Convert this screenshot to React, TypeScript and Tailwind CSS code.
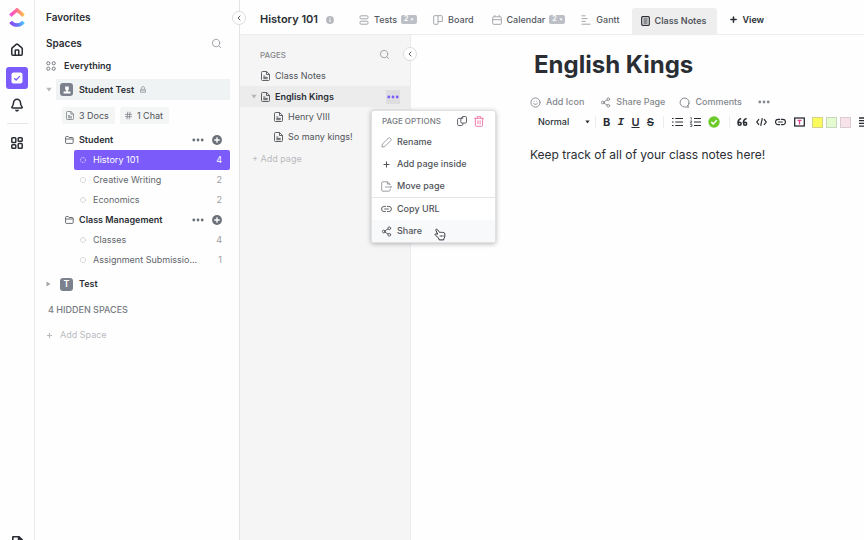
import React from 'react';
import { Hash, ChevronLeft, Search, Plus, Smile, Share2, Home, Bell } from 'lucide-react';

interface IconProps {
  className?: string;
}

const Logo = () => (
  <svg viewBox="0 0 16 20" className="h-5 w-4" fill="none">
    <defs>
      <linearGradient id="roof" x1="0" x2="1">
        <stop offset="0" stopColor="#f04fd8" />
        <stop offset="0.5" stopColor="#ff6f8e" />
        <stop offset="1" stopColor="#ffc04a" />
      </linearGradient>
      <linearGradient id="bowl" x1="0" x2="1">
        <stop offset="0" stopColor="#8a4df5" />
        <stop offset="0.5" stopColor="#6c6cf5" />
        <stop offset="1" stopColor="#4fc3fb" />
      </linearGradient>
    </defs>
    <path d="M1.3 7.6 8 1.9l6.7 5.7" stroke="url(#roof)" strokeWidth="3.4" />
    <path d="M1.6 13.8c3.5 4.3 9.3 4.3 12.8 0" stroke="url(#bowl)" strokeWidth="3.6" />
  </svg>
);

const GridIcon = ({ className }: IconProps) => (
  <svg viewBox="0 0 12 12" className={className} fill="none" stroke="currentColor" strokeWidth="1.5">
    <rect x="0.8" y="0.8" width="4" height="4.8" rx="0.8" />
    <rect x="7.2" y="0.8" width="4" height="3.4" rx="0.8" />
    <rect x="0.8" y="7.8" width="4" height="3.4" rx="0.8" />
    <rect x="7.2" y="6.4" width="4" height="4.8" rx="0.8" />
  </svg>
);

const EverythingIcon = () => (
  <svg viewBox="0 0 10 10" className="size-[10px] text-[#777b81]" fill="none" stroke="currentColor">
    <rect x="0.8" y="0.8" width="3" height="3" rx="1.2" />
    <rect x="6.2" y="0.8" width="3" height="3" rx="1.2" />
    <rect x="0.8" y="6.2" width="3" height="3" rx="1.2" />
    <rect x="6.2" y="6.2" width="3" height="3" rx="1.2" />
  </svg>
);

const PageIcon = ({ className }: IconProps) => (
  <svg viewBox="0 0 9 10" className={className} fill="none" stroke="currentColor" strokeWidth="0.9">
    <path d="M1.5.5h4L8.5 3.3v5.2a1 1 0 0 1-1 1h-6a1 1 0 0 1-1-1v-7a1 1 0 0 1 1-1ZM5.5.5v3h3" />
    <path d="M2.3 5h2M2.3 6.4h4.4M2.3 7.7h4.4" />
  </svg>
);

const FolderIcon = () => (
  <svg viewBox="0 0 9 8" className="h-2 w-[9px] text-[#5c6066]" fill="none" stroke="currentColor" strokeWidth="0.9">
    <path d="M.6 6.6V1.3c0-.5.3-.8.8-.8h1.8l.9 1h3.3c.5 0 .8.3.8.8v4.3c0 .5-.3.8-.8.8h-6c-.5 0-.8-.3-.8-.8ZM.6 3h7.6" />
  </svg>
);

const Dots = ({ className }: IconProps) => (
  <svg viewBox="0 0 12 4" className={className} fill="currentColor">
    <circle cx="1.8" cy="2" r="1.4" />
    <circle cx="6" cy="2" r="1.4" />
    <circle cx="10.2" cy="2" r="1.4" />
  </svg>
);

const LinkIcon = ({ className }: IconProps) => (
  <svg viewBox="0 0 12 8" className={className} fill="none" stroke="currentColor" strokeLinecap="round">
    <path d="M5 1.2H3.4a2.8 2.8 0 0 0 0 5.6H5M7 1.2h1.6a2.8 2.8 0 0 1 0 5.6H7M4 4h4" />
  </svg>
);

const Caret = ({ className }: IconProps) => (
  <svg viewBox="0 0 6 5" className={className} fill="currentColor">
    <path d="M.3.7h5.4L3 4.5Z" />
  </svg>
);

const CollapseButton = ({ label, className }: { label: string; className: string }) => (
  <button
    aria-label={label}
    className={`absolute z-10 flex size-[14px] items-center justify-center rounded-full border border-[#dcdcde] bg-white text-[#5c6066] ${className}`}
  >
    <ChevronLeft size={8} strokeWidth={3} />
  </button>
);

const Rail = () => (
  <nav className="flex w-[35px] shrink-0 flex-col items-center border-r border-[#e9ebef] pt-2 text-[#2a2e34]">
    <a href="#home" aria-label="ClickUp">
      <Logo />
    </a>
    <button aria-label="Home" className="mt-[15px]">
      <Home size={14} strokeWidth={2.6} />
    </button>
    <button aria-label="Tasks" className="mt-[10px] flex size-[22px] items-center justify-center rounded-[3px] bg-[#7b5cfa]">
      <svg viewBox="0 0 12 12" className="size-3" fill="none">
        <rect x="0.5" y="0.5" width="11" height="11" rx="2" fill="#fff" />
        <path d="m3.2 6.2 1.9 1.8 3.8-3.9" stroke="#7b5cfa" strokeWidth="1.3" />
      </svg>
    </button>
    <button aria-label="Notifications" className="mt-[9px]">
      <Bell size={14} strokeWidth={2.6} />
    </button>
    <hr className="mt-[11px] w-[21px] border-[#e3e5e9]" />
    <button aria-label="Dashboards" className="mt-[13px]">
      <GridIcon className="size-3" />
    </button>
    <button aria-label="Docs" className="mt-auto -mb-2">
      <PageIcon className="h-3 w-[11px] stroke-[1.5]" />
    </button>
  </nav>
);

const folders = [
  {
    name: 'Student',
    lists: [
      { name: 'History 101', count: 4, active: true },
      { name: 'Creative Writing', count: 2 },
      { name: 'Economics', count: 2 },
    ],
  },
  {
    name: 'Class Management',
    lists: [
      { name: 'Classes', count: 4 },
      { name: 'Assignment Submissio...', count: 1 },
    ],
  },
];

const ListLink = ({ name, count, active }: { name: string; count: number; active?: boolean }) => (
  <a
    href="#list"
    className={`ml-7 flex h-5 items-center rounded-[2px] pr-2 pl-[6px] ${
      active ? 'bg-[#7b5cfa] text-white' : 'text-[#62666c]'
    }`}
  >
    <svg viewBox="0 0 6 6" className={`size-[6px] ${active ? '' : 'text-[#a9acb2]'}`} fill="none" stroke="currentColor" strokeWidth="0.8">
      <circle cx="3" cy="3" r="2.5" strokeDasharray="1.1 0.86" />
    </svg>
    <span className="ml-[7px] flex-1 whitespace-nowrap">{name}</span>
    <span className={active ? '' : 'text-[#9a9da3]'}>{count}</span>
  </a>
);

const Sidebar = () => (
  <aside className="relative flex w-[205px] shrink-0 flex-col border-r border-[#e3e4e7] pt-[7px] pr-[9px] pl-[11px] text-[9px] text-[#2a2e34]">
    <CollapseButton label="Collapse sidebar" className="top-[11px] -right-[7px]" />
    <h2 className="flex h-5 items-center text-[10px] font-semibold">Favorites</h2>
    <div className="mt-[6px] flex h-5 items-center justify-between pr-2">
      <h2 className="text-[10px] font-semibold">Spaces</h2>
      <button aria-label="Search spaces" className="text-[#9a9da3]">
        <Search size={11} />
      </button>
    </div>
    <a href="#everything" className="mt-[3px] flex h-5 items-center gap-2 font-semibold">
      <EverythingIcon />
      Everything
    </a>
    <div className="mt-[3px] flex items-center gap-1">
      <Caret className="h-[5px] w-[6px] shrink-0 text-[#b4b7bc]" />
      <a href="#student-test" className="flex h-[21px] flex-1 items-center bg-[#f0f3f4] pl-1 font-semibold">
        <span className="flex size-[13px] items-center justify-center rounded-[3px] bg-[#7c828d]">
          <svg viewBox="0 0 8 8" className="size-2" fill="#fff">
            <path d="M2.2.6h3.6v3L4.8 4.6v1h2.6v1.8H.6V5.600h2.600v-1L2.200 3.600Z" />
          </svg>
        </span>
        <span className="mx-[6px]">Student Test</span>
        <svg viewBox="0 0 6 7" className="h-[7px] w-[6px] text-[#a9adb3]" fill="none" stroke="currentColor">
          <path d="M1.5 3V2a1.5 1.5 0 0 1 3 0v1M.5 3.3h5v3h-5ZM.5 4.8h5" />
        </svg>
      </a>
    </div>
    <div className="mt-[7px] ml-4 flex gap-[5px] text-[#505459]">
      <button className="flex h-[17px] items-center gap-[5px] rounded-[2px] bg-[#f4f5f5] pr-[6px] pl-1">
        <PageIcon className="h-[9px] w-2 text-[#777b81]" />
        3 Docs
      </button>
      <button className="flex h-[17px] items-center gap-1 rounded-[2px] bg-[#f4f5f5] pr-[6px] pl-1">
        <Hash size={9} className="text-[#777b81]" />1 Chat
      </button>
    </div>
    <div className="mt-[6px]">
      {folders.map((folder) => (
        <section key={folder.name}>
          <div className="ml-[19px] flex h-5 items-center pr-2 font-semibold">
            <FolderIcon />
            <h3 className="ml-[5px] flex-1">{folder.name}</h3>
            <button aria-label="Folder options" className="text-[#6b6f76]">
              <Dots className="h-1 w-3" />
            </button>
            <button aria-label="Add list" className="ml-2">
              <svg viewBox="0 0 10 10" className="size-[10px]">
                <circle cx="5" cy="5" r="4.9" fill="#6b6f78" />
                <path d="M5 2.3v5.4M2.3 5h5.4" stroke="#fff" strokeWidth="1.3" />
              </svg>
            </button>
          </div>
          {folder.lists.map((list) => (
            <ListLink key={list.name} {...list} />
          ))}
        </section>
      ))}
    </div>
    <a href="#test" className="mt-1 flex h-5 items-center font-semibold">
      <svg viewBox="0 0 5 6" className="h-[6px] w-[5px] text-[#a3a6ab]" fill="currentColor">
        <path d="M.5.4v5.2L4.6 3Z" />
      </svg>
      <span className="mr-[6px] ml-[9px] flex size-[13px] items-center justify-center rounded-[3px] bg-[#7c828d] text-white">T</span>
      Test
    </a>
    <button className="mt-[6px] flex h-5 items-center pl-[2px] font-medium text-[#777b81]">4 HIDDEN SPACES</button>
    <button className="mt-[5px] flex h-5 items-center gap-[7px] text-[#b9bbbf]">
      <Plus size={7} strokeWidth={4} />
      Add Space
    </button>
  </aside>
);

const CountBadge = () => (
  <span className="ml-1 flex h-[9px] w-4 items-center justify-center gap-[2px] rounded-[2px] bg-[#bcbfc5] text-[7px] font-semibold text-white">
    2
    <Caret className="h-[3px] w-1" />
  </span>
);

const Header = () => (
  <header className="flex h-[35px] shrink-0 items-center overflow-hidden border-b border-[#ededef] pt-[5px] pl-5 text-[9px] font-medium whitespace-nowrap text-[#54585e]">
    <h1 className="text-[11px] font-semibold text-[#2a2e34]">History 101</h1>
    <button aria-label="List info" className="ml-2">
      <svg viewBox="0 0 8 8" className="size-2">
        <circle cx="4" cy="4" r="3.9" fill="#b4b7bc" />
        <path d="M4 1.6v1M4 3.3v3" stroke="#fff" strokeWidth="1.1" />
      </svg>
    </button>
    <a href="#tests" className="ml-[25px] flex items-center">
      <svg viewBox="0 0 10 10" className="mr-[5px] size-[10px] text-[#a3a6ab]" fill="none" stroke="currentColor">
        <rect x="1" y="0.8" width="8" height="3" rx="1" />
        <rect x="1" y="6.2" width="8" height="3" rx="1" />
      </svg>
      Tests
      <CountBadge />
    </a>
    <a href="#board" className="ml-4 flex items-center">
      <svg viewBox="0 0 10 10" className="mr-[5px] size-[10px] text-[#a3a6ab]" fill="none" stroke="currentColor">
        <path d="M1.3.7h7.4c.4 0 .6.2.6.6v5.2H5v2c0 .5-.2.8-.6.8H1.3c-.4 0-.6-.3-.6-.8V1.3c0-.4.2-.6.6-.6ZM5 .7v5.8" />
      </svg>
      Board
    </a>
    <a href="#calendar" className="ml-[18px] flex items-center">
      <svg viewBox="0 0 10 10" className="mr-[5px] size-[10px] text-[#a3a6ab]" fill="none" stroke="currentColor">
        <path d="M1.3 1.8h7.4c.4 0 .6.2.6.6v6.1c0 .5-.2.8-.6.8H1.3c-.4 0-.6-.3-.6-.8V2.4c0-.4.2-.6.6-.6ZM.7 4.7h8.6M2.8 0v2M7.2 0v2" />
      </svg>
      Calendar
      <CountBadge />
    </a>
    <a href="#gantt" className="ml-4 flex items-center">
      <svg viewBox="0 0 10 10" className="mr-[5px] size-[10px] text-[#a3a6ab]" fill="none" stroke="currentColor">
        <path d="M.5.8h4M.5 3.6h6M.5 6.4h4M.5 9.2h9" />
      </svg>
      Gantt
    </a>
    <a href="#class-notes" className="ml-3 flex h-[26px] shrink-0 items-center self-end rounded-t-[3px] bg-[#eeeeee] pr-[11px] pl-[9px] font-semibold">
      <svg viewBox="0 0 9 10" className="mr-[5px] h-[10px] w-[9px] text-[#2a2e34]" fill="none" stroke="currentColor" strokeWidth="1.2">
        <rect x="0.7" y="0.7" width="7.6" height="8.6" rx="1" />
        <path d="M2.4 3h4.2M2.4 5h4.2M2.4 7h4.2" />
      </svg>
      Class Notes
    </a>
    <button className="ml-3 flex items-center gap-1 font-semibold text-[#2a2e34]">
      <Plus size={9} strokeWidth={4} />
      View
    </button>
  </header>
);

const menuRow = 'flex h-[22px] w-full items-center gap-[5px] pl-[9px] text-[9px] font-medium text-[#505459]';

const PageMenu = () => (
  <div role="menu" className="absolute top-6 left-[131px] z-20 w-[125px] rounded-[3px] border border-[#e1e1e4] bg-white shadow-[0_1px_5px_rgba(0,0,0,0.28)]">
    <div className="flex h-5 items-center pr-[11px] pl-[10px]">
      <span className="flex-1 text-[8px] font-medium whitespace-nowrap text-[#777b81]">PAGE OPTIONS</span>
      <button aria-label="Duplicate page" className="text-[#505459]">
        <svg viewBox="0 0 10 10" className="size-[10px]" fill="none" stroke="currentColor" strokeWidth="0.9">
          <path d="M5.7.5h2.500q1.300 0 1.300 1.200v4.200q0 1.200-1.300 1.200H5q-1.200 0-1.200-1.200V2.400ZM5.700.5v1.900H3.800M3.800 2.400h-2Q.6 2.400.6 3.600v4.700q0 1.200 1.200 1.200h2.800q1.200 0 1.200-1.200V7.100" />
        </svg>
      </button>
      <button aria-label="Delete page" className="ml-[7px] text-[#ee6fa3]">
        <svg viewBox="0 0 10 11" className="h-[11px] w-[10px]" fill="none" stroke="currentColor" strokeWidth="0.9">
          <path d="M.2 2.3h9.600M3.200 2.3V.7h3.600v1.600M1.400 2.3v7q0 1 1 1h5.200q1 0 1-1v-7M3.900 4.400v3.900M6.100 4.400v3.900" />
        </svg>
      </button>
    </div>
    <button role="menuitem" className={menuRow}>
      <svg viewBox="0 0 11 11" className="size-[11px] text-[#85888e]" fill="none" stroke="currentColor" strokeWidth="0.8">
        <path d="M.9 10.100 1.500 7 7.600.9q.6-.5 1.200 0L10 2.100q.6.6 0 1.200L3.900 9.500Z" />
      </svg>
      Rename
    </button>
    <button role="menuitem" className={menuRow}>
      <svg viewBox="0 0 11 11" className="size-[11px]" stroke="currentColor">
        <path d="M5.500 2.500v6M2.500 5.500h6" />
      </svg>
      Add page inside
    </button>
    <button role="menuitem" className={menuRow}>
      <svg viewBox="0 0 11 11" className="size-[11px] text-[#85888e]" fill="none" stroke="currentColor" strokeWidth="0.8">
        <path d="M9 4V3H6.300V.8M6.300.8 9 3M6.300.8H1.800Q.7.8.7 1.900v7.200q0 1.100 1.100 1.100h6Q9 10.200 9 9.100V8M4 6h6.500M9.300 4.800 10.500 6 9.300 7.200" />
      </svg>
      Move page
    </button>
    <hr className="border-[#e4e4e6]" />
    <button role="menuitem" className={menuRow}>
      <LinkIcon className="h-2 w-[11px]" />
      Copy URL
    </button>
    <button role="menuitem" className={`${menuRow} relative bg-[#f8f9fb]`}>
      <Share2 size={11} />
      Share
      <svg viewBox="0 0 12 13" className="absolute top-2 left-[62px] h-[13px] w-3" fill="#fff" stroke="#2a2e34" strokeWidth="1">
        <path d="M3.200 1.400c-.7-.6-1.700.1-1.300 1l1.800 3.800-1.700-.4c-.9-.1-1.300.8-.6 1.400l3 2.600.8 2.100h4.500l.3-1.600c1-1.500 1.100-3.100.5-5.200-.3-.8-1.300-.8-1.500-.2-.3-.8-1.300-.9-1.600-.2-.5-.7-1.300-.6-1.500 0Z" />
        <path d="M6.200 7v2M7.600 7v2M9 7v2" strokeWidth="0.6" />
      </svg>
    </button>
  </div>
);

const PagesPanel = () => (
  <aside className="relative w-[171px] shrink-0 border-r border-[#ececee] bg-[#f5f5f5] pt-[9px] text-[9px] text-[#505459]">
    <CollapseButton label="Collapse pages" className="top-3 -right-[7px]" />
    <div className="flex h-[21px] items-center justify-between pr-5 pl-5">
      <h2 className="text-[8px] font-medium text-[#85888e]">PAGES</h2>
      <button aria-label="Search pages" className="text-[#9a9da3]">
        <Search size={11} />
      </button>
    </div>
    <a href="#page-1" className="flex h-[21px] items-center gap-[5px] pl-[21px]">
      <PageIcon className="h-[10px] w-[9px]" />
      Class Notes
    </a>
    <div className="relative flex h-[21px] items-center bg-[#ececec] pr-[10px] pl-[11px] font-semibold text-[#2a2e34]">
      <Caret className="h-[5px] w-[6px] text-[#b4b7bc]" />
      <a href="#page-2" className="ml-1 flex flex-1 items-center gap-[5px]">
        <PageIcon className="h-[10px] w-[9px] text-[#505459]" />
        English Kings
      </a>
      <button aria-label="Page options" className="flex size-[14px] items-center justify-center bg-[#dedee0] text-[#7b5cfa]">
        <Dots className="h-1 w-3" />
      </button>
      <PageMenu />
    </div>
    <a href="#page-3" className="flex h-5 items-center gap-[5px] pl-[34px]">
      <PageIcon className="h-[10px] w-[9px]" />
      Henry VIII
    </a>
    <a href="#page-4" className="flex h-5 items-center gap-[5px] pl-[34px]">
      <PageIcon className="h-[10px] w-[9px]" />
      So many kings!
    </a>
    <button className="mt-[2px] flex h-5 items-center pl-3 text-[#b9bbbf]">+ Add page</button>
  </aside>
);

const Separator = () => <span className="h-3 w-px shrink-0 bg-[#ededef]" />;

const Toolbar = () => (
  <div className="flex h-5 items-center text-[#2a2e34]">
    <div className="relative ml-2 flex w-[52px] shrink-0 items-center">
      <select aria-label="Text style" className="w-full appearance-none bg-transparent text-[9px] font-medium">
        <option>Normal</option>
      </select>
      <Caret className="pointer-events-none absolute right-0 h-1 w-[5px]" />
    </div>
    <span className="w-[5px] shrink-0" />
    <Separator />
    <div className="ml-[7px] flex w-[51px] shrink-0 justify-between text-[11px]">
      <button aria-label="Bold" className="font-bold">B</button>
      <button aria-label="Italic" className="font-['Liberation_Mono'] font-bold italic">I</button>
      <button aria-label="Underline" className="font-semibold underline">U</button>
      <button aria-label="Strikethrough" className="font-semibold line-through">S</button>
    </div>
    <span className="w-[9px] shrink-0" />
    <Separator />
    <div className="ml-2 flex shrink-0 items-center gap-[7px]">
      <button aria-label="Bulleted list">
        <svg viewBox="0 0 11 10" className="h-[10px] w-[11px]" stroke="currentColor" strokeWidth="1.2">
          <path d="M0 1.500h1.600M0 5h1.600M0 8.500h1.600M3.300 1.500H11M3.300 5H11M3.300 8.500H11" />
        </svg>
      </button>
      <button aria-label="Numbered list">
        <svg viewBox="0 0 11 10" className="h-[10px] w-[11px]" fill="none" stroke="currentColor" strokeWidth="1.2">
          <path d="M4 1.500h7M4 5h7M4 8.500h7" />
          <path d="M.4.6h.9v2M.2 4h1.700L.3 6h1.800M.2 7.500h1.700v2H.2" strokeWidth="0.7" />
        </svg>
      </button>
      <button aria-label="Checklist">
        <svg viewBox="0 0 12 12" className="size-3" fill="none">
          <circle cx="6" cy="6" r="5.700" fill="#6bc92a" />
          <path d="m3.300 6.100 1.900 1.900 3.600-3.700" stroke="#fff" strokeWidth="1.500" />
        </svg>
      </button>
    </div>
    <span className="w-[9px] shrink-0" />
    <Separator />
    <div className="ml-[7px] flex shrink-0 items-center gap-2">
      <button aria-label="Quote">
        <svg viewBox="0 0 11 10" className="h-[10px] w-[11px]" fill="none" stroke="currentColor" strokeWidth="1.600">
          <path d="M4.200 1.500Q1 2.200 1 6" />
          <circle cx="2.600" cy="6.700" r="1.500" />
          <path d="M9.600 1.500Q6.400 2.200 6.400 6" />
          <circle cx="8.100" cy="6.700" r="1.500" />
        </svg>
      </button>
      <button aria-label="Code">
        <svg viewBox="0 0 11 10" className="h-[10px] w-[11px]" fill="none" stroke="currentColor" strokeWidth="1.200">
          <path d="M3 2.200.7 5 3 7.800M8 2.200 10.300 5 8 7.800M6.300 1.200 4.700 8.800" />
        </svg>
      </button>
      <button aria-label="Link">
        <LinkIcon className="h-2 w-[11px] stroke-[1.3]" />
      </button>
      <button aria-label="Text colour">
        <svg viewBox="0 0 11 10" className="h-[10px] w-[11px]" fill="none" stroke="currentColor" strokeWidth="1.300">
          <rect x="0.700" y="1" width="9.600" height="8" />
          <path d="M3.500 3.400h4M5.500 3.400v4" stroke="#e8478f" />
        </svg>
      </button>
    </div>
    <div className="ml-[7px] flex shrink-0 gap-[3px]">
      <button aria-label="Yellow highlight" className="size-[11px] border border-[#d5d58a] bg-[#f8fa5e]" />
      <button aria-label="Green highlight" className="size-[11px] border border-[#c9d6bd] bg-[#e4fbd0]" />
      <button aria-label="Pink highlight" className="size-[11px] border border-[#d9ccd1] bg-[#f9e3ea]" />
    </div>
    <button aria-label="Align" className="ml-2 shrink-0">
      <svg viewBox="0 0 11 10" className="h-[10px] w-[11px]" stroke="currentColor" strokeWidth="1.300">
        <path d="M0 1h11M0 3.700h11M0 6.400h11M0 9.100h11" />
      </svg>
    </button>
  </div>
);

const Doc = () => (
  <article className="min-w-0 flex-1 overflow-hidden pt-[14px] pl-[119px] text-[#2a2e34]">
    <h2 className="pl-1 text-[24px] leading-8 font-bold">English Kings</h2>
    <div className="mt-[11px] flex h-5 items-center text-[9px] font-medium whitespace-nowrap text-[#85888e]">
      <button className="flex items-center gap-[5px]">
        <Smile size={11} />
        Add Icon
      </button>
      <button className="ml-4 flex items-center gap-[5px]">
        <Share2 size={11} />
        Share Page
      </button>
      <button className="ml-[14px] flex items-center gap-[5px]">
        <svg viewBox="0 0 11 11" className="size-[11px]" fill="none" stroke="currentColor">
          <path d="M8.400 9A4.500 4.500 0 1 0 5.500 10h4.300L8.400 9Q10 7.700 10 5.500" />
        </svg>
        Comments
      </button>
      <button aria-label="More" className="ml-4">
        <Dots className="h-1 w-3" />
      </button>
    </div>
    <Toolbar />
    <p className="mt-[13px] text-[12px] leading-5 whitespace-nowrap">Keep track of all of your class notes here!</p>
  </article>
);

const App = () => (
  <div className="flex h-screen overflow-hidden bg-[#fefefe] font-['Inter',sans-serif]">
    <Rail />
    <Sidebar />
    <div className="flex min-w-0 flex-1 flex-col">
      <Header />
      <main className="flex min-h-0 flex-1">
        <PagesPanel />
        <Doc />
      </main>
    </div>
  </div>
);

export default App;
